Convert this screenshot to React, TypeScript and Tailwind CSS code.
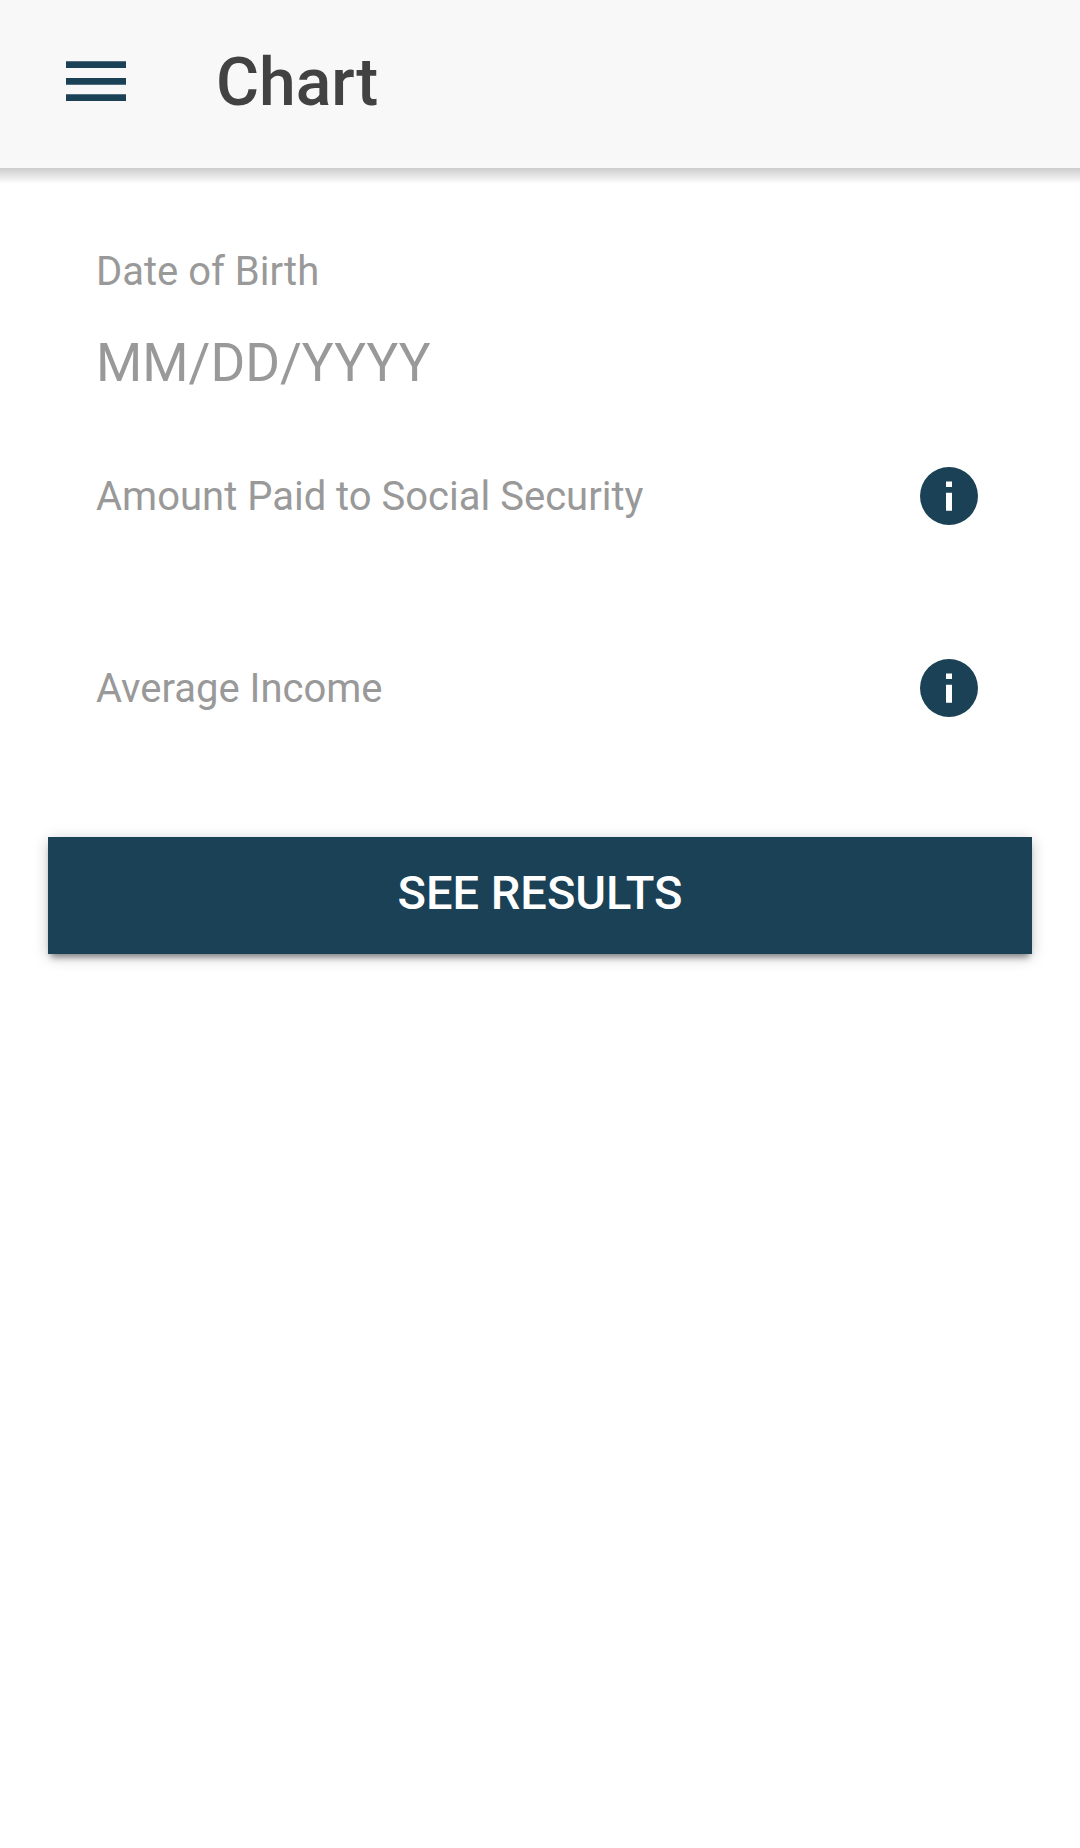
import React from "react";

function InfoButton({ label }: { label: string }) {
  return (
    <button type="button" aria-label={label} className="shrink-0 text-[#1b4156]">
      <svg viewBox="0 0 58 58" className="block size-[58px]" aria-hidden="true">
        <circle cx="29" cy="29" r="29" fill="currentColor" />
        <path fill="#fff" d="M26 14.5h6V20h-6zM26 25.7h6v18h-6z" />
      </svg>
    </button>
  );
}

function AmountField({ id, label }: { id: string; label: string }) {
  return (
    <div className="flex h-[178px] items-start justify-between">
      <div className="flex grow flex-col">
        <label htmlFor={id} className="pt-[7px] text-[40px] leading-[46px] text-[#999]">{label}</label>
        <input id={id} type="text" inputMode="decimal" className="h-20 w-full bg-transparent text-[53px] text-[#444] outline-none" />
      </div>
      <InfoButton label={`About ${label}`} />
    </div>
  );
}

export default function App() {
  return (
    <div className="min-h-screen bg-white font-[Roboto,sans-serif]">
      <header className="relative flex h-42 items-center bg-[#f8f8f8] px-[66px] pb-1.5 after:absolute after:inset-x-0 after:top-full after:h-4 after:bg-linear-to-b after:from-black/20 after:to-transparent">
        <button type="button" aria-label="Open menu" className="text-[#1b4156]">
          <svg viewBox="0 0 60 40" className="block h-10 w-[60px]" aria-hidden="true">
            <path fill="currentColor" d="M0 0.3h60V7H0zM0 17h60v6.7H0zM0 33.3h60V40H0z" />
          </svg>
        </button>
        <h1 className="ml-[90px] pt-1 text-[66px] leading-[80px] font-medium text-[#424242]">Chart</h1>
      </header>
      <form className="px-12 pt-[81px]" onSubmit={(e) => e.preventDefault()}>
        <div className="flex flex-col gap-[14px] pr-[54px] pl-12">
          <div className="flex h-[204px] flex-col">
            <label htmlFor="dob" className="text-[40px] leading-[46px] text-[#999]">Date of Birth</label>
            <input id="dob" type="text" placeholder="MM/DD/YYYY" className="mt-7 h-20 w-full bg-transparent text-[53px] text-[#444] outline-none placeholder:text-[#999]" />
          </div>
          <AmountField id="paid" label="Amount Paid to Social Security" />
          <AmountField id="income" label="Average Income" />
        </div>
        <button type="submit" className="block h-[117px] w-full bg-[#1b4156] pb-1 text-[47px] font-medium text-white shadow-[0_6px_6px_-3px_rgba(0,0,0,0.4),0_3px_14px_rgba(0,0,0,0.22)]">SEE RESULTS</button>
      </form>
    </div>
  );
}
